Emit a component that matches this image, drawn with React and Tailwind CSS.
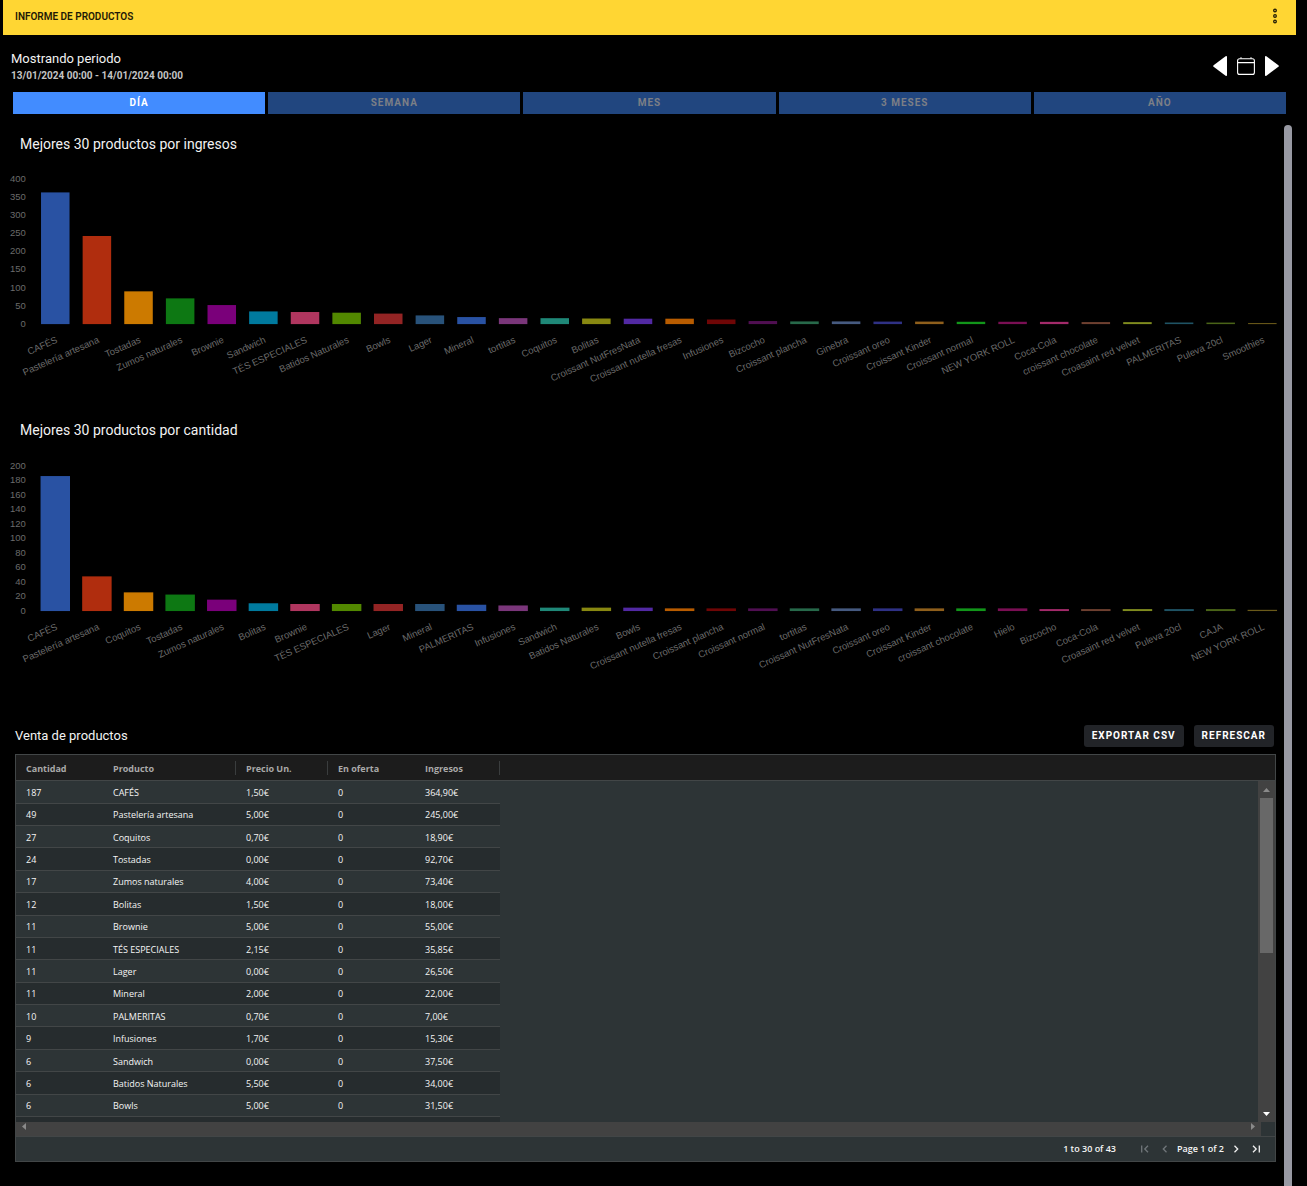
import { useState } from 'react';
import clsx from 'clsx';

const PERIODS = ['DÍA', 'SEMANA', 'MES', '3 MESES', 'AÑO'];

const COLORS = [
  '#2952a3', '#b02d0e', '#cc7a00', '#0d7813', '#7a007a', '#007a9e',
  '#b0365f', '#528800', '#932424', '#28527a', '#2952a3', '#7a367a',
  '#1f8878', '#888811', '#5229a3', '#b85c00', '#6f0606', '#500f52',
  '#27694a', '#465a80', '#2f3185', '#8f5f1c', '#12961a', '#7a0f54',
  '#a32a6a', '#6e4030', '#808c1f', '#1f5364', '#4a6418', '#6a5a1a',
];

const INCOME = [
  ['CAFÉS', 364.9],
  ['Pastelería artesana', 245],
  ['Tostadas', 92.7],
  ['Zumos naturales', 73.4],
  ['Brownie', 55],
  ['Sandwich', 37.5],
  ['TÉS ESPECIALES', 35.85],
  ['Batidos Naturales', 34],
  ['Bowls', 31.5],
  ['Lager', 26.5],
  ['Mineral', 22],
  ['tortitas', 19],
  ['Coquitos', 18.9],
  ['Bolitas', 18],
  ['Croissant NutFresNata', 17.5],
  ['Croissant nutella fresas', 17.5],
  ['Infusiones', 15.3],
  ['Bizcocho', 11],
  ['Croissant plancha', 10],
  ['Ginebra', 10],
  ['Croissant oreo', 9.5],
  ['Croissant Kinder', 9.5],
  ['Croissant normal', 9],
  ['NEW YORK ROLL', 9],
  ['Coca-Cola', 8.8],
  ['croissant chocolate', 8.2],
  ['Croasaint red velvet', 8],
  ['PALMERITAS', 7],
  ['Puleva 20cl', 6.8],
  ['Smoothies', 5.5],
];

const QUANTITY = [
  ['CAFÉS', 187],
  ['Pastelería artesana', 49],
  ['Coquitos', 27],
  ['Tostadas', 24],
  ['Zumos naturales', 17],
  ['Bolitas', 12],
  ['Brownie', 11],
  ['TÉS ESPECIALES', 11],
  ['Lager', 11],
  ['Mineral', 11],
  ['PALMERITAS', 10],
  ['Infusiones', 9],
  ['Sandwich', 6],
  ['Batidos Naturales', 6],
  ['Bowls', 6],
  ['Croissant nutella fresas', 5],
  ['Croissant plancha', 5],
  ['Croissant normal', 5],
  ['tortitas', 5],
  ['Croissant NutFresNata', 5],
  ['Croissant oreo', 5],
  ['Croissant Kinder', 5],
  ['croissant chocolate', 5],
  ['Hielo', 5],
  ['Bizcocho', 4],
  ['Coca-Cola', 4],
  ['Croasaint red velvet', 4],
  ['Puleva 20cl', 4],
  ['CAJA', 4],
  ['NEW YORK ROLL', 3],
];

const ROWS = [
  ['187', 'CAFÉS', '1,50€', '0', '364,90€'],
  ['49', 'Pastelería artesana', '5,00€', '0', '245,00€'],
  ['27', 'Coquitos', '0,70€', '0', '18,90€'],
  ['24', 'Tostadas', '0,00€', '0', '92,70€'],
  ['17', 'Zumos naturales', '4,00€', '0', '73,40€'],
  ['12', 'Bolitas', '1,50€', '0', '18,00€'],
  ['11', 'Brownie', '5,00€', '0', '55,00€'],
  ['11', 'TÉS ESPECIALES', '2,15€', '0', '35,85€'],
  ['11', 'Lager', '0,00€', '0', '26,50€'],
  ['11', 'Mineral', '2,00€', '0', '22,00€'],
  ['10', 'PALMERITAS', '0,70€', '0', '7,00€'],
  ['9', 'Infusiones', '1,70€', '0', '15,30€'],
  ['6', 'Sandwich', '0,00€', '0', '37,50€'],
  ['6', 'Batidos Naturales', '5,50€', '0', '34,00€'],
  ['6', 'Bowls', '5,00€', '0', '31,50€'],
];

const COLUMNS = [
  { name: 'Cantidad', width: 'w-[87px]' },
  { name: 'Producto', width: 'w-[133px]', divider: true },
  { name: 'Precio Un.', width: 'w-[92px]', divider: true },
  { name: 'En oferta', width: 'w-[87px]' },
  { name: 'Ingresos', width: 'w-[85px]', divider: true },
];

const PLOT_HEIGHT = 153;
const FIRST_CENTER = 55;
const PITCH = 43.8;

function BarChart({ title, data, max, step, barWidth, baseline }) {
  const ticks = [];
  for (let t = 0; t <= max; t += step) ticks.push(t);

  return (
    <section>
      <h2 className="pl-[17px] text-sm leading-5 text-[#f2f2f2]">{title}</h2>
      <svg
        viewBox="0 0 1348 280"
        role="img"
        aria-label={title}
        className="block w-full font-['Liberation_Sans',Arial,sans-serif] text-[10px]"
      >
        {ticks.map((t) => (
          <text
            key={t}
            x="24"
            y={baseline - (t / max) * PLOT_HEIGHT + 3}
            textAnchor="end"
            fill="#6b6b6b"
          >
            {t}
          </text>
        ))}
        {data.map(([name, value], i) => {
          const center = FIRST_CENTER + i * PITCH;
          const height = (value / max) * PLOT_HEIGHT - 1;
          return (
            <g key={name}>
              <rect
                x={center - barWidth / 2}
                y={baseline - height}
                width={barWidth}
                height={height}
                fill={COLORS[i]}
              />
              <text
                textAnchor="end"
                fill="#6b6b6b"
                transform={`translate(${center + 3} ${baseline + 19}) rotate(-24)`}
              >
                {name}
              </text>
            </g>
          );
        })}
      </svg>
    </section>
  );
}

function ProductsTable() {
  return (
    <div className="mt-[7px] border border-[#424647] bg-[#2d3436] font-['Open_Sans','Noto_Sans',sans-serif] text-[9px] text-[#f5f5f5]">
      <div className="flex h-[367px] overflow-hidden">
        <table className="h-[384px] flex-1 table-fixed border-separate border-spacing-0 text-left">
          <thead>
            <tr className="h-[26px] bg-[#1c1c1c] text-[#a9a9a9]">
              {COLUMNS.map((col) => (
                <th
                  key={col.name}
                  className={clsx('border-b border-[#424647] p-0 font-bold', col.width)}
                >
                  <div
                    className={clsx(
                      'flex h-3.5 items-center border-r pt-0.5 pl-2.5',
                      col.divider ? 'border-[#3a3d3e]' : 'border-transparent'
                    )}
                  >
                    {col.name}
                  </div>
                </th>
              ))}
              <td className="border-b border-[#424647] p-0" />
            </tr>
          </thead>
          <tbody>
            {ROWS.map((row, i) => (
              <tr key={i} className="leading-4">
                {row.map((cell, j) => (
                  <td
                    key={j}
                    className={clsx(
                      'border-b border-[#424647] pt-0.5 pr-0 pb-0 pl-2.5',
                      i % 2 === 1 && 'bg-[#262c2e]'
                    )}
                  >
                    {cell}
                  </td>
                ))}
                <td className="p-0" />
              </tr>
            ))}
            {/* next row, peeking out under the last full one */}
            <tr className="h-[22px]">
              <td colSpan={5} className="bg-[#262c2e] p-0" />
              <td className="p-0" />
            </tr>
          </tbody>
        </table>
        <div className="flex w-[17px] flex-col">
          <div className="h-[26px] border-b border-[#424647] bg-[#1c1c1c]" />
          <div className="flex flex-1 flex-col items-center bg-[#424242]">
            <div className="flex h-[17px] items-center">
              <svg viewBox="0 0 7 4" className="h-1 w-[7px]" fill="#8a8a8a">
                <path d="M3.5 0 7 4H0z" />
              </svg>
            </div>
            <div className="h-[155px] w-[13px] bg-[#686868]" />
            <div className="mt-auto flex h-[17px] items-center">
              <svg viewBox="0 0 7 4" className="h-1 w-[7px]" fill="#ffffff">
                <path d="M0 0h7L3.5 4z" />
              </svg>
            </div>
          </div>
        </div>
      </div>
      <div className="flex h-3.5">
        <div className="flex flex-1 items-start justify-between bg-[#424242] px-1.5 pt-px">
          <svg viewBox="0 0 4 7" className="h-[7px] w-1" fill="#8a8a8a">
            <path d="M4 0v7L0 3.5z" />
          </svg>
          <svg viewBox="0 0 4 7" className="h-[7px] w-1" fill="#8a8a8a">
            <path d="M0 0v7l4-3.5z" />
          </svg>
        </div>
        <div className="w-3.5" />
      </div>
      <Pager />
    </div>
  );
}

function PagerButton({ label, path, muted }) {
  return (
    <button type="button" aria-label={label} disabled={muted}>
      <svg
        viewBox="0 0 8 8"
        className={clsx('size-2', muted ? 'text-[#70767a]' : 'text-[#f0f0f0]')}
        fill="none"
        stroke="currentColor"
        strokeWidth="1.3"
      >
        <path d={path} />
      </svg>
    </button>
  );
}

function Pager() {
  return (
    <div className="flex h-[25px] items-center justify-end border-t border-[#424647] pr-[15px] font-semibold">
      <span className="mr-[25px]">1 to 30 of 43</span>
      <div className="flex items-center gap-2">
        <div className="flex gap-3">
          <PagerButton label="First Page" muted path="M.7.5v7M7 .8 3.8 4 7 7.2" />
          <PagerButton label="Previous Page" muted path="M5.5.8 2.3 4l3.2 3.2" />
        </div>
        <span>Page 1 of 2</span>
        <div className="flex gap-3">
          <PagerButton label="Next Page" path="M2.5.8 5.7 4 2.5 7.2" />
          <PagerButton label="Last Page" path="M1 .8 4.2 4 1 7.2M7.3.5v7" />
        </div>
      </div>
    </div>
  );
}

export default function App() {
  const [period, setPeriod] = useState('DÍA');

  return (
    <div className="flex min-h-screen flex-col bg-black pl-[3px] font-[Roboto,sans-serif] text-white">
      <header className="mr-[11px] flex h-[35px] items-center justify-between bg-[#ffd633] pr-[15px] pb-[3px] pl-3">
        <h1 className="text-[10px] font-semibold text-[#1f1a05]">INFORME DE PRODUCTOS</h1>
        <button type="button" aria-label="Menú">
          <svg viewBox="0 0 12 16" className="h-4 w-3" fill="none" stroke="#1f1a05" strokeWidth="1.3">
            <circle cx="6" cy="2.5" r="1.3" />
            <circle cx="6" cy="8" r="1.3" />
            <circle cx="6" cy="13.5" r="1.3" />
          </svg>
        </button>
      </header>

      <div className="flex items-center justify-between pt-[15px] pr-7 pl-2">
        <div>
          <p className="text-[13px] leading-[18px] text-[#f2f2f2]">Mostrando periodo</p>
          <p className="text-[10px] leading-4 font-bold text-[#c4c4c4]">
            13/01/2024 00:00 - 14/01/2024 00:00
          </p>
        </div>
        <div className="flex items-center gap-2.5 pb-0.5">
          <button type="button" aria-label="Anterior">
            <svg viewBox="0 0 14 20" className="h-5 w-3.5" fill="#ffffff">
              <path d="M12.6.2Q14-.4 14 1v18q0 1.4-1.4.8L.6 10.8Q-.3 10 .6 9.2z" />
            </svg>
          </button>
          <button type="button" aria-label="Calendario">
            <svg
              viewBox="0 0 18 18"
              className="size-[18px]"
              fill="none"
              stroke="#ffffff"
              strokeWidth="1.1"
            >
              <rect x=".6" y="1.8" width="16.8" height="15.6" rx="2" />
              <path d="M.6 5.6h16.8M4 .2v1.6M14 .2v1.6" />
            </svg>
          </button>
          <button type="button" aria-label="Siguiente">
            <svg viewBox="0 0 14 20" className="h-5 w-3.5" fill="#ffffff">
              <path d="M1.4.2Q0-.4 0 1v18q0 1.4 1.4.8l12-9q.9-.8 0-1.6z" />
            </svg>
          </button>
        </div>
      </div>

      <nav className="mt-2 mr-[21px] ml-2.5 grid grid-cols-5 gap-[3px]">
        {PERIODS.map((p) => (
          <button
            key={p}
            type="button"
            onClick={() => setPeriod(p)}
            className={clsx(
              'h-[22px] pb-px text-[10px] font-bold tracking-widest',
              p === period ? 'bg-[#428cff] text-white' : 'bg-[#21467f] text-[#7c7f86]'
            )}
          >
            {p}
          </button>
        ))}
      </nav>

      <div className="mt-[11px] mr-[15px] flex flex-1">
        <main className="min-w-0 flex-1 pt-[9px] pb-5">
          <BarChart
            title="Mejores 30 productos por ingresos"
            data={INCOME}
            max={400}
            step={50}
            barWidth={30}
            baseline={179}
          />
          <BarChart
            title="Mejores 30 productos por cantidad"
            data={QUANTITY}
            max={200}
            step={20}
            barWidth={31}
            baseline={180}
          />

          <section className="mr-2 ml-3 pt-[19px]">
            <div className="mr-0.5 flex items-center justify-between">
              <h2 className="text-[13px] leading-5 text-[#f2f2f2]">Venta de productos</h2>
              <div className="flex gap-2.5 text-[10px] font-bold tracking-widest">
                <button type="button" className="h-[22px] rounded-[3px] bg-[#222428] px-2 pb-px">
                  EXPORTAR CSV
                </button>
                <button type="button" className="h-[22px] rounded-[3px] bg-[#222428] px-2 pb-px">
                  REFRESCAR
                </button>
              </div>
            </div>
            <ProductsTable />
          </section>
        </main>
        <div className="w-2 rounded-t-full bg-[#9899a3]" />
      </div>
    </div>
  );
}
